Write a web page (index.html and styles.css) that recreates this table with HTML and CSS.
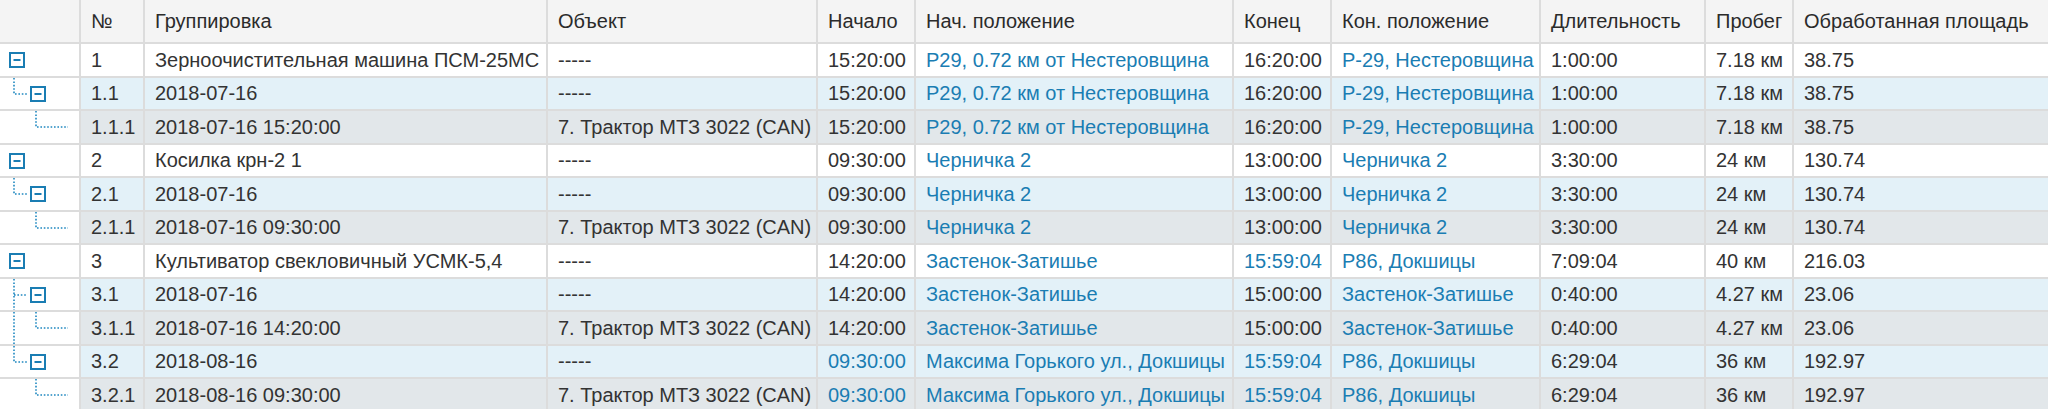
FILE: index.html
```html
<!DOCTYPE html>
<html lang="ru">
<head>
<meta charset="utf-8">
<title>Отчёт</title>
<link rel="stylesheet" href="styles.css">
</head>
<body>
<svg class="defs" width="0" height="0" aria-hidden="true">
  <symbol id="box" viewBox="0 0 16 16">
    <rect x="1" y="1" width="14" height="14" fill="#fff" stroke="#1a7db3" stroke-width="2"/>
    <path d="M4.5 8h7" stroke="#1a7db3" stroke-width="2"/>
  </symbol>
</svg>
<table class="grid">
  <colgroup>
    <col class="c-tree"><col class="c-num"><col class="c-group"><col class="c-obj"><col class="c-time"><col class="c-pos1"><col class="c-time"><col class="c-pos2"><col class="c-dur"><col class="c-dist"><col class="c-area">
  </colgroup>
  <thead>
    <tr>
      <th></th><th>№</th><th>Группировка</th><th>Объект</th><th>Начало</th><th>Нач. положение</th><th>Конец</th><th>Кон. положение</th><th>Длительность</th><th>Пробег</th><th>Обработанная площадь</th>
    </tr>
  </thead>
  <tbody>
    <tr class="l1">
      <td class="tree"><svg class="tw" viewBox="0 0 80 30"><use href="#box" x="9" y="7" width="16" height="16"/></svg></td>
      <td>1</td><td>Зерноочистительная машина ПСМ-25МС</td><td>-----</td><td>15:20:00</td><td class="link">Р29, 0.72 км от Нестеровщина</td><td>16:20:00</td><td class="link">Р-29, Нестеровщина</td><td>1:00:00</td><td>7.18 км</td><td>38.75</td>
    </tr>
    <tr class="l2">
      <td class="tree"><svg class="tw" viewBox="0 0 80 30"><path class="dot" d="M14 -1v16h13"/><use href="#box" x="30" y="7" width="16" height="16"/></svg></td>
      <td>1.1</td><td>2018-07-16</td><td>-----</td><td>15:20:00</td><td class="link">Р29, 0.72 км от Нестеровщина</td><td>16:20:00</td><td class="link">Р-29, Нестеровщина</td><td>1:00:00</td><td>7.18 км</td><td>38.75</td>
    </tr>
    <tr class="l3">
      <td class="tree"><svg class="tw" viewBox="0 0 80 30"><path class="dot" d="M36 -1v16h32"/></svg></td>
      <td>1.1.1</td><td>2018-07-16 15:20:00</td><td>7. Трактор МТЗ 3022 (CAN)</td><td>15:20:00</td><td class="link">Р29, 0.72 км от Нестеровщина</td><td>16:20:00</td><td class="link">Р-29, Нестеровщина</td><td>1:00:00</td><td>7.18 км</td><td>38.75</td>
    </tr>
    <tr class="l1">
      <td class="tree"><svg class="tw" viewBox="0 0 80 30"><use href="#box" x="9" y="7" width="16" height="16"/></svg></td>
      <td>2</td><td>Косилка крн-2 1</td><td>-----</td><td>09:30:00</td><td class="link">Черничка 2</td><td>13:00:00</td><td class="link">Черничка 2</td><td>3:30:00</td><td>24 км</td><td>130.74</td>
    </tr>
    <tr class="l2">
      <td class="tree"><svg class="tw" viewBox="0 0 80 30"><path class="dot" d="M14 -1v16h13"/><use href="#box" x="30" y="7" width="16" height="16"/></svg></td>
      <td>2.1</td><td>2018-07-16</td><td>-----</td><td>09:30:00</td><td class="link">Черничка 2</td><td>13:00:00</td><td class="link">Черничка 2</td><td>3:30:00</td><td>24 км</td><td>130.74</td>
    </tr>
    <tr class="l3">
      <td class="tree"><svg class="tw" viewBox="0 0 80 30"><path class="dot" d="M36 -1v16h32"/></svg></td>
      <td>2.1.1</td><td>2018-07-16 09:30:00</td><td>7. Трактор МТЗ 3022 (CAN)</td><td>09:30:00</td><td class="link">Черничка 2</td><td>13:00:00</td><td class="link">Черничка 2</td><td>3:30:00</td><td>24 км</td><td>130.74</td>
    </tr>
    <tr class="l1">
      <td class="tree"><svg class="tw" viewBox="0 0 80 30"><use href="#box" x="9" y="7" width="16" height="16"/></svg></td>
      <td>3</td><td>Культиватор свекловичный УСМК-5,4</td><td>-----</td><td>14:20:00</td><td class="link">Застенок-Затишье</td><td class="link">15:59:04</td><td class="link">Р86, Докшицы</td><td>7:09:04</td><td>40 км</td><td>216.03</td>
    </tr>
    <tr class="l2">
      <td class="tree"><svg class="tw" viewBox="0 0 80 30"><path class="dot" d="M14 -1v32M14 15h13"/><use href="#box" x="30" y="7" width="16" height="16"/></svg></td>
      <td>3.1</td><td>2018-07-16</td><td>-----</td><td>14:20:00</td><td class="link">Застенок-Затишье</td><td>15:00:00</td><td class="link">Застенок-Затишье</td><td>0:40:00</td><td>4.27 км</td><td>23.06</td>
    </tr>
    <tr class="l3">
      <td class="tree"><svg class="tw" viewBox="0 0 80 30"><path class="dot" d="M14 -1v32M36 -1v16h32"/></svg></td>
      <td>3.1.1</td><td>2018-07-16 14:20:00</td><td>7. Трактор МТЗ 3022 (CAN)</td><td>14:20:00</td><td class="link">Застенок-Затишье</td><td>15:00:00</td><td class="link">Застенок-Затишье</td><td>0:40:00</td><td>4.27 км</td><td>23.06</td>
    </tr>
    <tr class="l2">
      <td class="tree"><svg class="tw" viewBox="0 0 80 30"><path class="dot" d="M14 -1v16h13"/><use href="#box" x="30" y="7" width="16" height="16"/></svg></td>
      <td>3.2</td><td>2018-08-16</td><td>-----</td><td class="link">09:30:00</td><td class="link">Максима Горького ул., Докшицы</td><td class="link">15:59:04</td><td class="link">Р86, Докшицы</td><td>6:29:04</td><td>36 км</td><td>192.97</td>
    </tr>
    <tr class="l3">
      <td class="tree"><svg class="tw" viewBox="0 0 80 30"><path class="dot" d="M36 -1v16h32"/></svg></td>
      <td>3.2.1</td><td>2018-08-16 09:30:00</td><td>7. Трактор МТЗ 3022 (CAN)</td><td class="link">09:30:00</td><td class="link">Максима Горького ул., Докшицы</td><td class="link">15:59:04</td><td class="link">Р86, Докшицы</td><td>6:29:04</td><td>36 км</td><td>192.97</td>
    </tr>
  </tbody>
</table>
</body>
</html>
```

FILE: styles.css
```css
html, body {
  margin: 0;
  padding: 0;
  background: #ffffff;
}

body {
  font-family: "Liberation Sans", Arial, sans-serif;
  font-size: 20px;
  color: #333333;
}

.defs {
  position: absolute;
  width: 0;
  height: 0;
  overflow: hidden;
}

.grid {
  border-collapse: collapse;
  table-layout: fixed;
  width: 2048px;
}

.c-tree { width: 80px; }
.c-num { width: 64px; }
.c-group { width: 403px; }
.c-obj { width: 270px; }
.c-time { width: 98px; }
.c-pos1 { width: 318px; }
.c-pos2 { width: 209px; }
.c-dur { width: 165px; }
.c-dist { width: 88px; }
.c-area { width: 255px; }

.grid th,
.grid td {
  border: 2px solid #dcdcdc;
  padding: 0 10px;
  white-space: nowrap;
  overflow: hidden;
  text-align: left;
  vertical-align: middle;
}

.grid th {
  background: #f4f4f4;
  font-weight: normal;
  color: #2b2b2b;
  height: 42px;
  border-top: 0;
}

.grid tr > :first-child {
  border-left: 0;
}

.grid tr > :last-child {
  border-right: 0;
}

.grid tbody tr {
  height: 34px;
}

.grid tbody tr:nth-child(even) {
  height: 33px;
}

.l2 td { background: #e3f1f8; }
.l3 td { background: #e2e7ea; }

.grid td.tree {
  background: #ffffff;
  padding: 0;
}

.tw {
  display: block;
  width: 80px;
  height: 30px;
  overflow: visible;
}

.dot {
  fill: none;
  stroke: #1f88c0;
  stroke-width: 1.6;
  stroke-dasharray: 1.6 1.8;
}

.link { color: #1a7db3; }
```
